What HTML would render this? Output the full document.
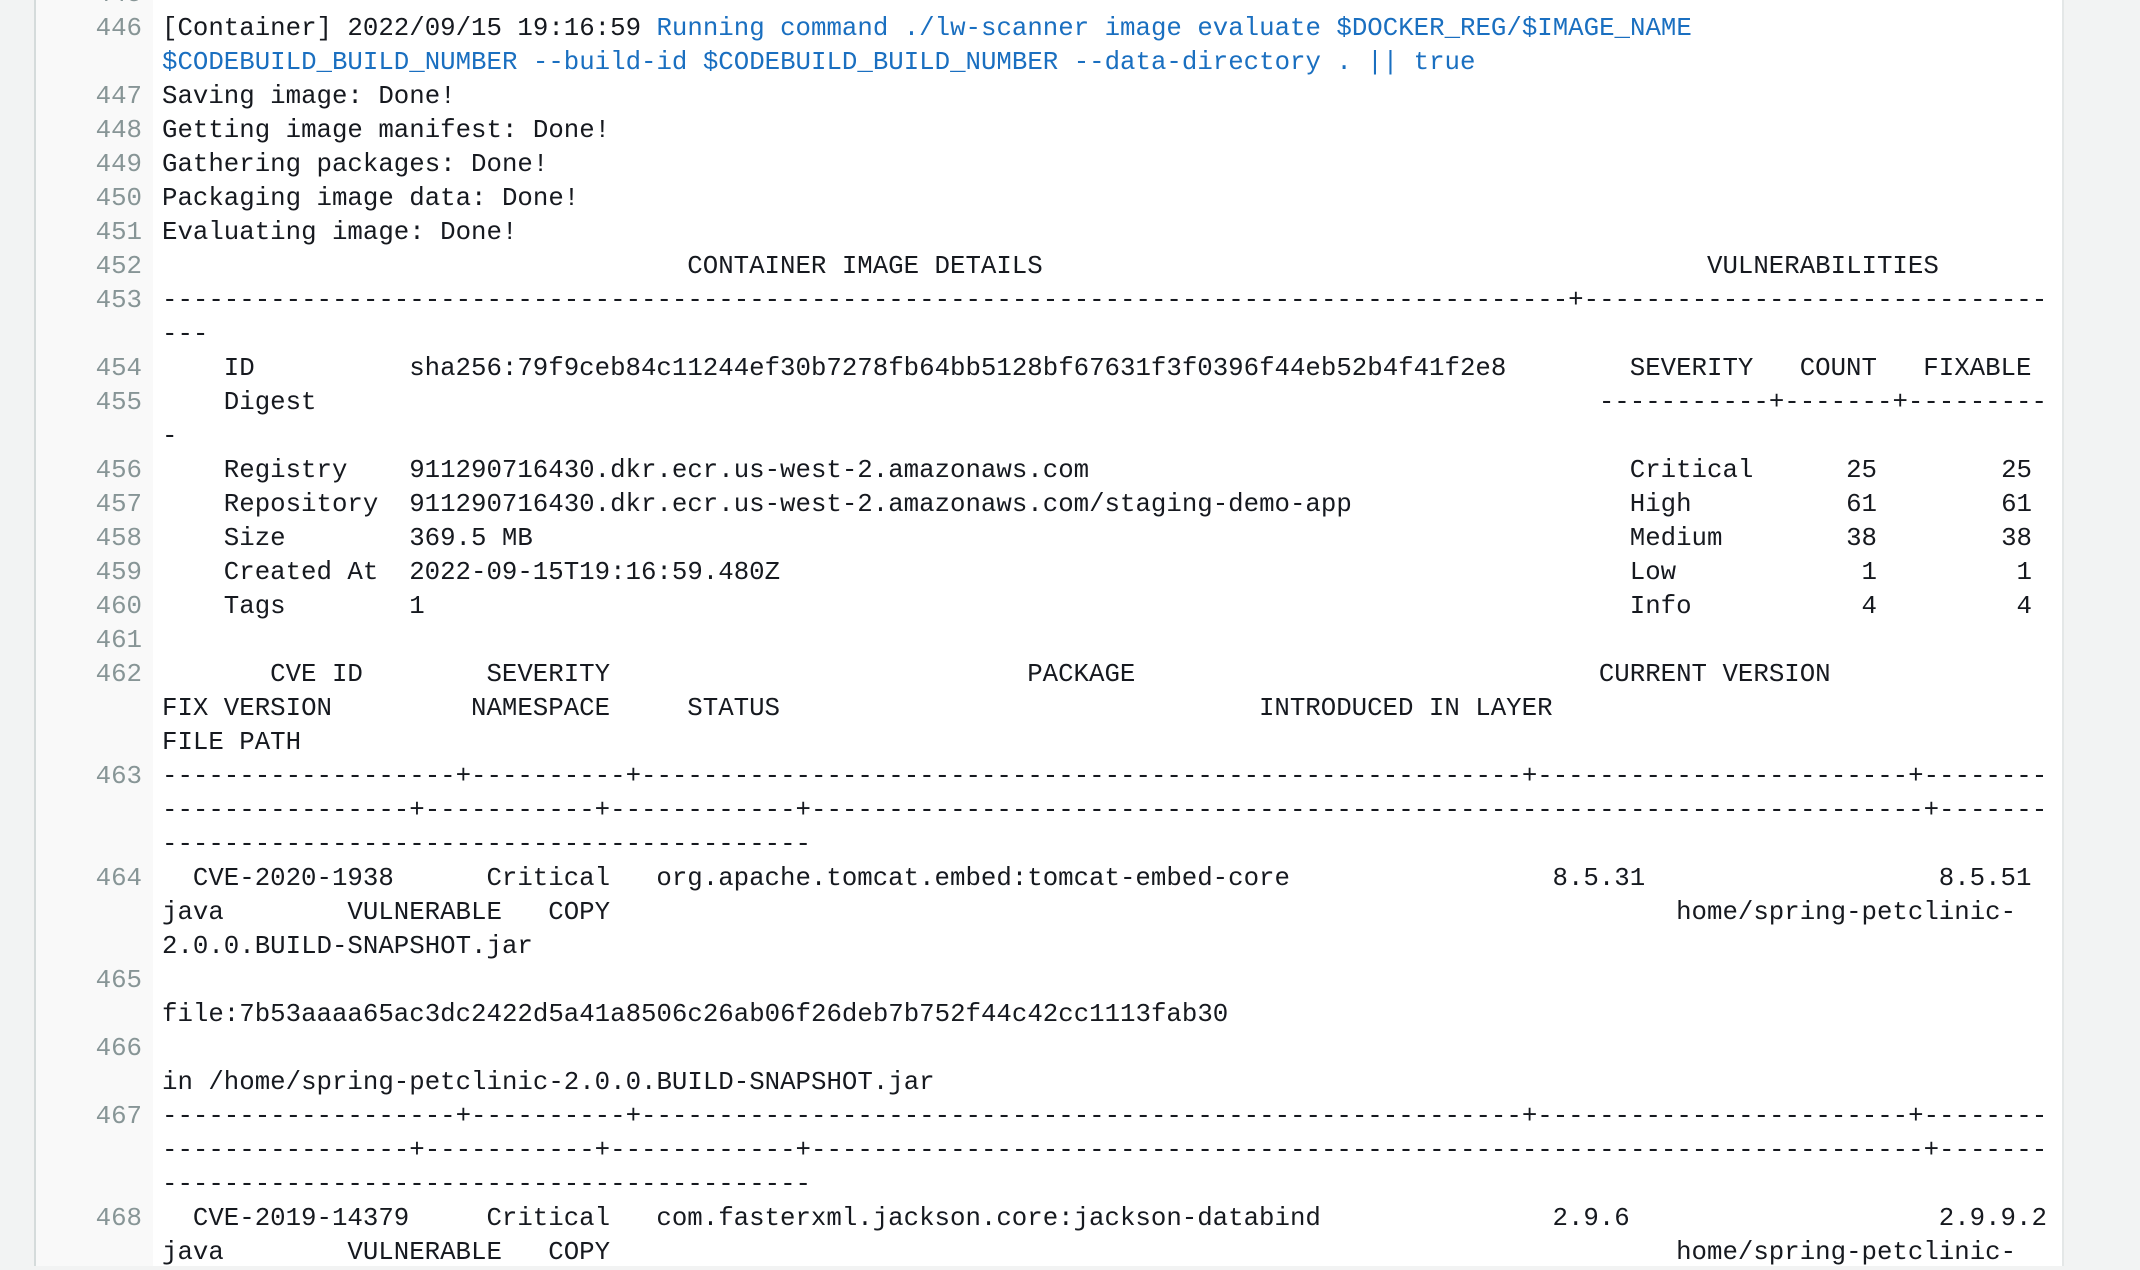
<!DOCTYPE html>
<html><head><meta charset="utf-8"><style>
html,body{margin:0;padding:0;width:2140px;height:1266px;overflow:hidden;background:#f2f3f3;}
#panel{position:absolute;left:34px;top:0;width:2026px;height:1266px;background:#fff;border-left:2px solid #d5dbdb;border-right:2px solid #e4e7e7;}
#gutter{position:absolute;left:36px;top:0;width:117px;height:1266px;background:#f9f9f9;}
#wrap{position:absolute;left:0;top:3px;width:2140px;height:1266px;}
.r{position:absolute;height:34px;line-height:34px;font-family:"Liberation Mono",monospace;font-size:25.75px;color:#16191f;white-space:pre;}
.n{position:absolute;right:1998px;color:#879596;font-family:"Liberation Mono",monospace;font-size:25.75px;line-height:34px;white-space:pre;}
.b{color:#1a6fc0;}
.ra{text-align:right;}
</style></head><body>
<div id="panel"></div><div id="gutter"></div>
<div id="wrap">
<div class="n" style="top:-25px">445</div>
<div class="n" style="top:9px">446</div>
<div class="n" style="top:77px">447</div>
<div class="n" style="top:111px">448</div>
<div class="n" style="top:145px">449</div>
<div class="n" style="top:179px">450</div>
<div class="n" style="top:213px">451</div>
<div class="n" style="top:247px">452</div>
<div class="n" style="top:281px">453</div>
<div class="n" style="top:349px">454</div>
<div class="n" style="top:383px">455</div>
<div class="n" style="top:451px">456</div>
<div class="n" style="top:485px">457</div>
<div class="n" style="top:519px">458</div>
<div class="n" style="top:553px">459</div>
<div class="n" style="top:587px">460</div>
<div class="n" style="top:621px">461</div>
<div class="n" style="top:655px">462</div>
<div class="n" style="top:757px">463</div>
<div class="n" style="top:859px">464</div>
<div class="n" style="top:961px">465</div>
<div class="n" style="top:1029px">466</div>
<div class="n" style="top:1097px">467</div>
<div class="n" style="top:1199px">468</div>

<div class="r" style="top:9px;left:162px">[Container] 2022/09/15 19:16:59 <span class="b">Running command ./lw-scanner image evaluate $DOCKER_REG/$IMAGE_NAME</span></div>
<div class="r b" style="top:43px;left:162px">$CODEBUILD_BUILD_NUMBER --build-id $CODEBUILD_BUILD_NUMBER --data-directory . || true</div>
<div class="r" style="top:77px;left:162px">Saving image: Done!</div>
<div class="r" style="top:111px;left:162px">Getting image manifest: Done!</div>
<div class="r" style="top:145px;left:162px">Gathering packages: Done!</div>
<div class="r" style="top:179px;left:162px">Packaging image data: Done!</div>
<div class="r" style="top:213px;left:162px">Evaluating image: Done!</div>
<div class="r" style="top:247px;left:687.3px">CONTAINER IMAGE DETAILS</div>
<div class="r" style="top:247px;left:1707px">VULNERABILITIES</div>
<div class="r" style="top:281px;left:162px">-------------------------------------------------------------------------------------------+------------------------------</div>
<div class="r" style="top:315px;left:162px">---</div>
<div class="r" style="top:349px;left:223.8px">ID</div>
<div class="r" style="top:349px;left:409.2px">sha256:79f9ceb84c11244ef30b7278fb64bb5128bf67631f3f0396f44eb52b4f41f2e8</div>
<div class="r" style="top:349px;left:1629.75px">SEVERITY</div>
<div class="r" style="top:349px;left:1799.7px">COUNT</div>
<div class="r" style="top:349px;left:1923.3px">FIXABLE</div>
<div class="r" style="top:383px;left:223.8px">Digest</div>
<div class="r" style="top:383px;left:1598.85px">-----------+-------+---------</div>
<div class="r" style="top:417px;left:162px">-</div>

<div class="r" style="top:451px;left:223.8px">Registry</div>
<div class="r" style="top:451px;left:409.2px">911290716430.dkr.ecr.us-west-2.amazonaws.com</div>
<div class="r" style="top:451px;left:1629.75px">Critical</div>
<div class="r ra" style="top:451px;right:263px">25</div>
<div class="r ra" style="top:451px;right:108px">25</div>

<div class="r" style="top:485px;left:223.8px">Repository</div>
<div class="r" style="top:485px;left:409.2px">911290716430.dkr.ecr.us-west-2.amazonaws.com/staging-demo-app</div>
<div class="r" style="top:485px;left:1629.75px">High</div>
<div class="r ra" style="top:485px;right:263px">61</div>
<div class="r ra" style="top:485px;right:108px">61</div>

<div class="r" style="top:519px;left:223.8px">Size</div>
<div class="r" style="top:519px;left:409.2px">369.5 MB</div>
<div class="r" style="top:519px;left:1629.75px">Medium</div>
<div class="r ra" style="top:519px;right:263px">38</div>
<div class="r ra" style="top:519px;right:108px">38</div>

<div class="r" style="top:553px;left:223.8px">Created At</div>
<div class="r" style="top:553px;left:409.2px">2022-09-15T19:16:59.480Z</div>
<div class="r" style="top:553px;left:1629.75px">Low</div>
<div class="r ra" style="top:553px;right:263px">1</div>
<div class="r ra" style="top:553px;right:108px">1</div>

<div class="r" style="top:587px;left:223.8px">Tags</div>
<div class="r" style="top:587px;left:409.2px">1</div>
<div class="r" style="top:587px;left:1629.75px">Info</div>
<div class="r ra" style="top:587px;right:263px">4</div>
<div class="r ra" style="top:587px;right:108px">4</div>

<div class="r" style="top:655px;left:270.15px">CVE ID</div>
<div class="r" style="top:655px;left:486.45px">SEVERITY</div>
<div class="r" style="top:655px;left:1027.2px">PACKAGE</div>
<div class="r" style="top:655px;left:1598.85px">CURRENT VERSION</div>
<div class="r" style="top:689px;left:162px">FIX VERSION</div>
<div class="r" style="top:689px;left:471px">NAMESPACE</div>
<div class="r" style="top:689px;left:687.3px">STATUS</div>
<div class="r" style="top:689px;left:1258.95px">INTRODUCED IN LAYER</div>
<div class="r" style="top:723px;left:162px">FILE PATH</div>

<div class="r" style="top:757px;left:162px">-------------------+----------+---------------------------------------------------------+------------------------+--------</div>
<div class="r" style="top:791px;left:162px">----------------+-----------+------------+------------------------------------------------------------------------+-------</div>
<div class="r" style="top:825px;left:162px">------------------------------------------</div>

<div class="r" style="top:859px;left:192.9px">CVE-2020-1938</div>
<div class="r" style="top:859px;left:486.45px">Critical</div>
<div class="r" style="top:859px;left:656.4px">org.apache.tomcat.embed:tomcat-embed-core</div>
<div class="r" style="top:859px;left:1552.5px">8.5.31</div>
<div class="r" style="top:859px;left:1938.75px">8.5.51</div>
<div class="r" style="top:893px;left:162px">java</div>
<div class="r" style="top:893px;left:347.4px">VULNERABLE</div>
<div class="r" style="top:893px;left:548.25px">COPY</div>
<div class="r" style="top:893px;left:1676.1px">home/spring-petclinic-</div>
<div class="r" style="top:927px;left:162px">2.0.0.BUILD-SNAPSHOT.jar</div>
<div class="r" style="top:995px;left:162px">file:7b53aaaa65ac3dc2422d5a41a8506c26ab06f26deb7b752f44c42cc1113fab30</div>
<div class="r" style="top:1063px;left:162px">in /home/spring-petclinic-2.0.0.BUILD-SNAPSHOT.jar</div>

<div class="r" style="top:1097px;left:162px">-------------------+----------+---------------------------------------------------------+------------------------+--------</div>
<div class="r" style="top:1131px;left:162px">----------------+-----------+------------+------------------------------------------------------------------------+-------</div>
<div class="r" style="top:1165px;left:162px">------------------------------------------</div>

<div class="r" style="top:1199px;left:192.9px">CVE-2019-14379</div>
<div class="r" style="top:1199px;left:486.45px">Critical</div>
<div class="r" style="top:1199px;left:656.4px">com.fasterxml.jackson.core:jackson-databind</div>
<div class="r" style="top:1199px;left:1552.5px">2.9.6</div>
<div class="r" style="top:1199px;left:1938.75px">2.9.9.2</div>
<div class="r" style="top:1233px;left:162px">java</div>
<div class="r" style="top:1233px;left:347.4px">VULNERABLE</div>
<div class="r" style="top:1233px;left:548.25px">COPY</div>
<div class="r" style="top:1233px;left:1676.1px">home/spring-petclinic-</div>
</div>
</body></html>
